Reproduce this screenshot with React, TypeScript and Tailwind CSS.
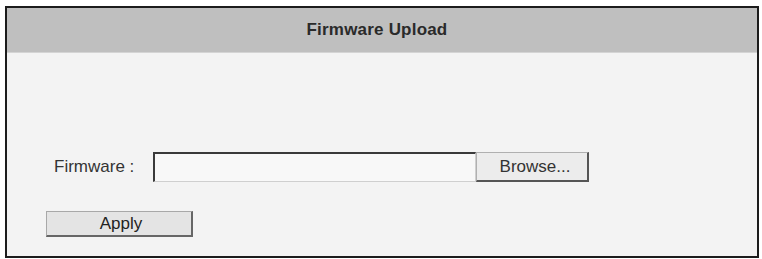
import React from 'react';

const App: React.FC = () => {
  return (
    <div
      className="w-[762px] h-[259px] bg-white pt-[6px] pl-[5px]"
      style={{ fontFamily: '"Liberation Sans", Arial, sans-serif' }}
    >
      <div className="w-[754px] h-[252px] border-2 border-[#1c1c1c] flex flex-col">
        {/* 标题栏 */}
        <div className="h-[45px] bg-[#bfbfbf] border-b border-[#d4d4d4] flex items-center justify-center">
          <span className="ml-[-10px] text-[17px] font-bold text-[#2a2a2a] tracking-[0.2px]">Firmware Upload</span>
        </div>

        {/* 内容区 */}
        <div className="flex-1 bg-[#f3f3f3] pt-[99px] pl-[39px]">
          <div className="flex items-center h-[30px]">
            <span className="ml-[8px] w-[99px] text-[17px] text-[#333]">Firmware :</span>
            <div className="w-[323px] h-[30px] bg-[#f8f8f8] border-t-2 border-l-2 border-[#3a3a3a] border-b border-r border-b-[#cfcfcf] border-r-[#cfcfcf]" />
            <button className="w-[113px] h-[30px] pl-[6px] bg-[#ececec] border border-[#b0b0b0] border-r-2 border-b-2 border-r-[#555] border-b-[#555] text-[17px] text-[#333] flex items-center justify-center">
              Browse...
            </button>
          </div>
          <button className="mt-[29px] w-[147px] h-[26px] pl-[4px] bg-[#e4e4e4] border border-[#a8a8a8] border-r-2 border-b-2 border-r-[#666] border-b-[#666] text-[17px] text-[#222] flex items-center justify-center">
            Apply
          </button>
        </div>
      </div>
    </div>
  );
};

export default App;
